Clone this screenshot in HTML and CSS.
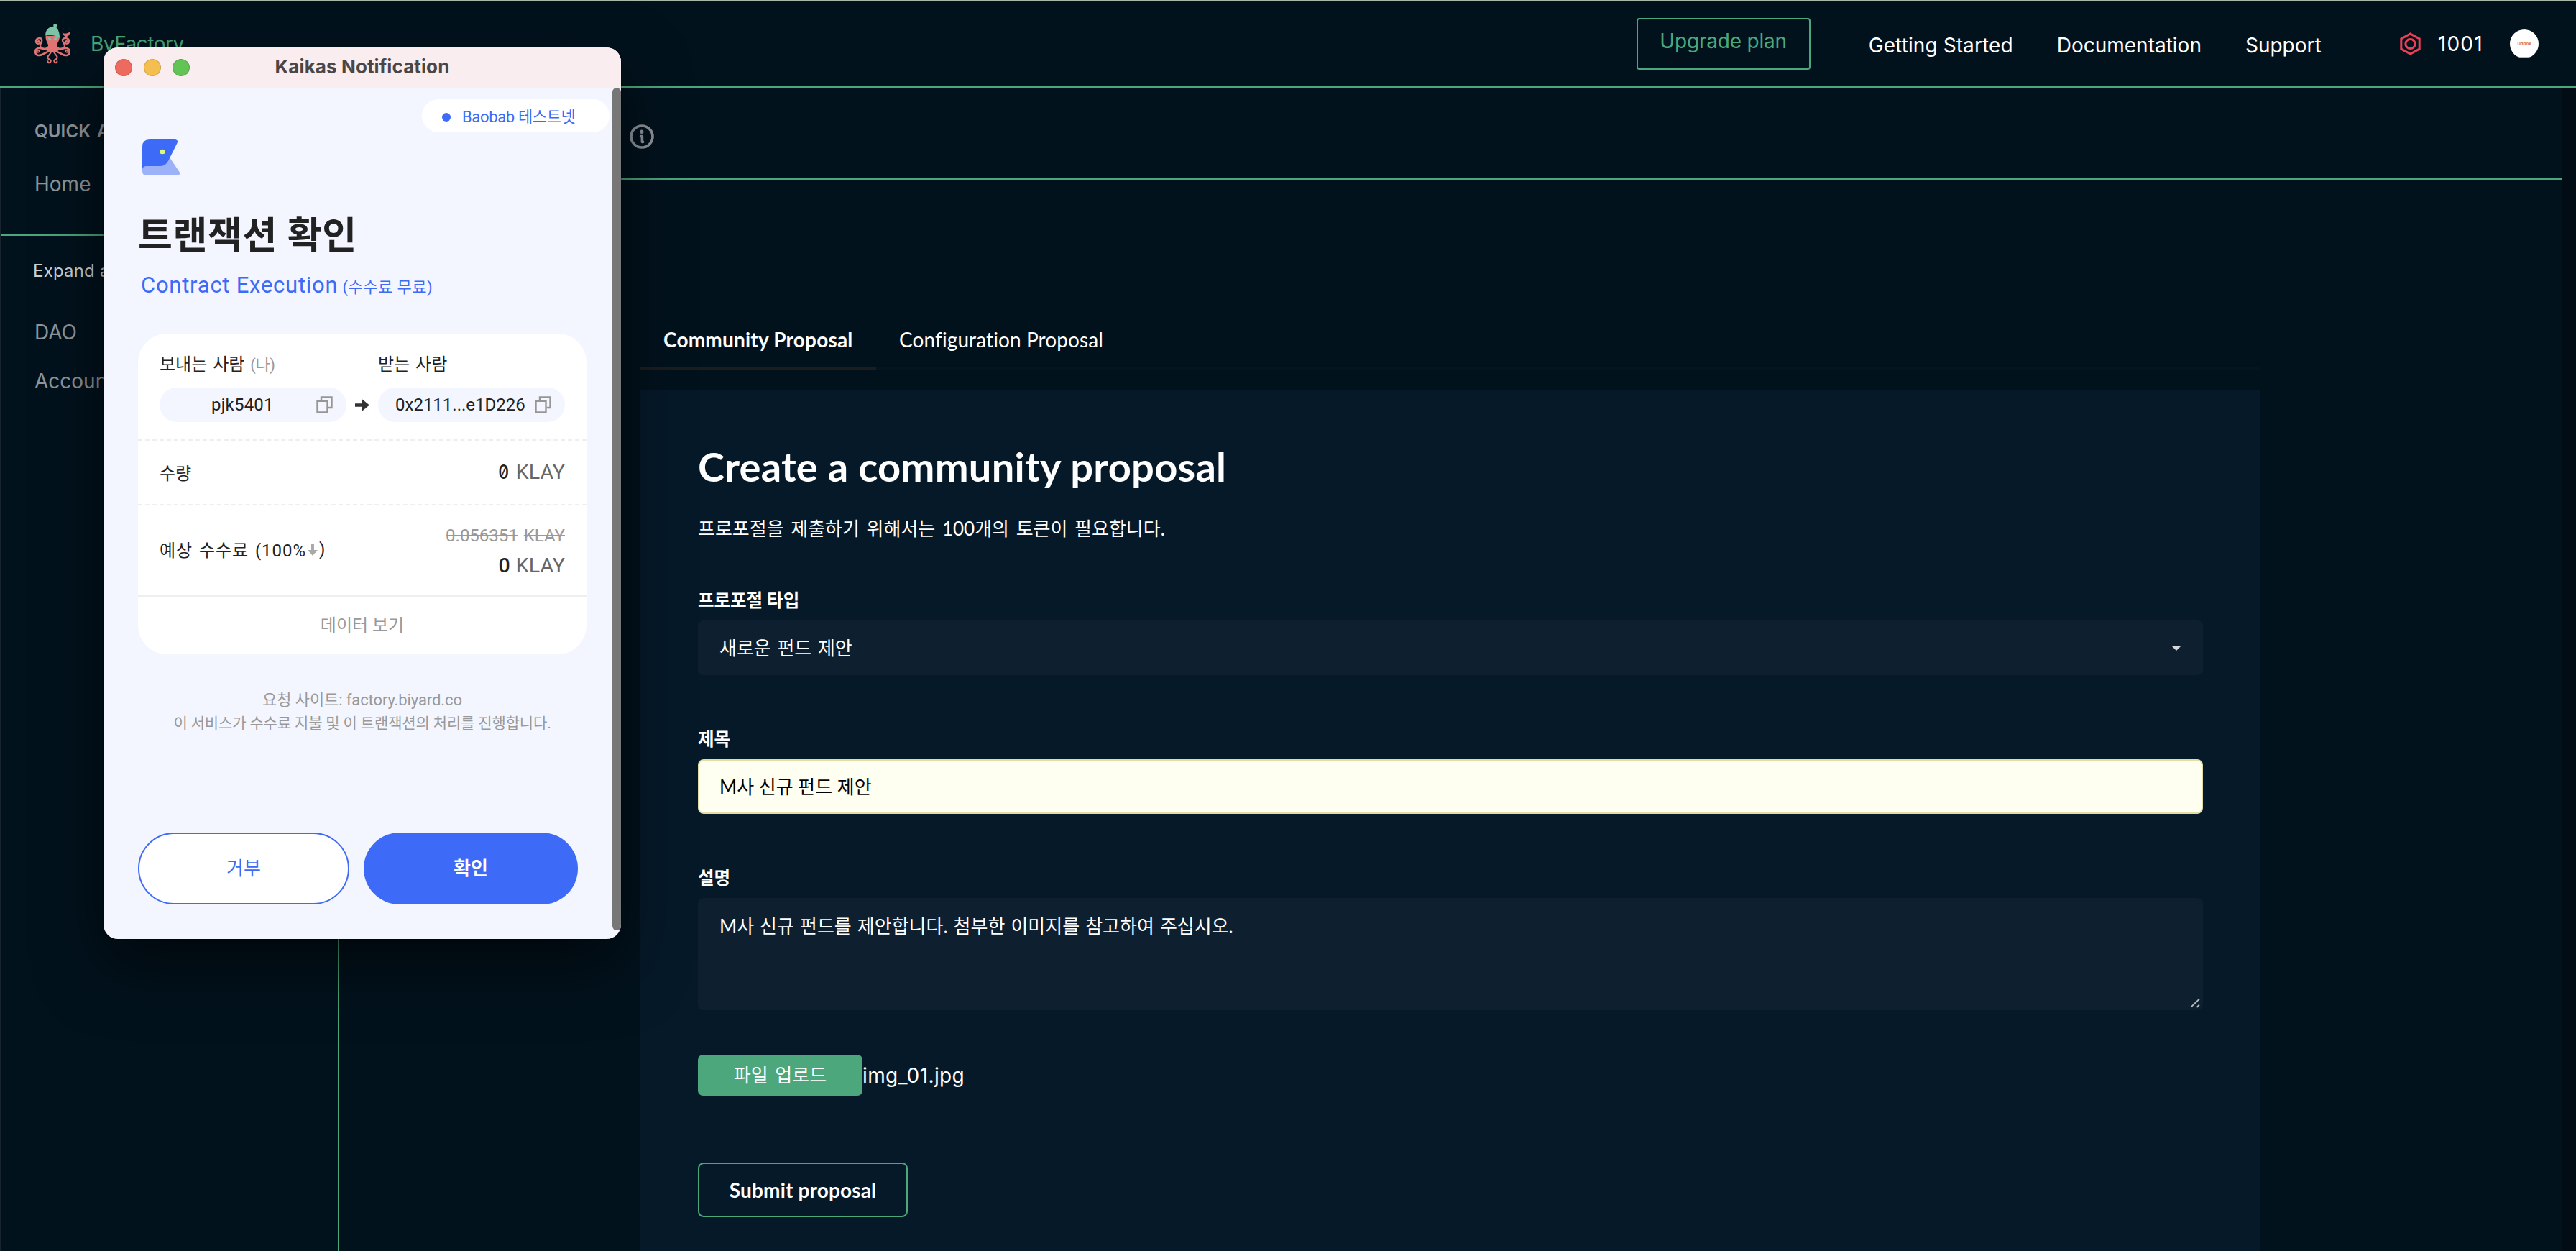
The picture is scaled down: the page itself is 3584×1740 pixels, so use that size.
FILE: index.html
```html
<!DOCTYPE html>
<html lang="ko">
<head>
<meta charset="utf-8">
<title>ByFactory</title>
<link rel="stylesheet" href="styles.css">
</head>
<body>
<div class="app">
  <header class="topbar">
    <div class="brand">
      <svg class="brand-logo" viewBox="54 38 150 168" fill="none" stroke="#e27474" stroke-linecap="round">
        <path stroke-width="7" d="M110 136C98 148 80 146 78 130C77 120 88 112 84 103C79 94 59 98 60 112C61 124 77 124 76 114C75 109 69 109 69 113"/>
        <path stroke-width="7" d="M148 136C160 148 178 146 180 130C181 120 168 114 171 104C176 94 199 97 198 111C197 124 181 124 182 114C183 109 190 109 190 113"/>
        <path stroke-width="8" d="M114 146C98 146 84 138 70 140C52 145 55 168 70 170C90 171 98 156 118 152"/>
        <path stroke-width="8" d="M144 146C160 146 174 138 188 140C206 145 203 168 188 170C168 171 160 156 140 152"/>
        <path stroke-width="5" d="M62 154C64 160 76 158 74 151C72 147 66 148 67 152M196 154C194 160 182 158 184 151C186 147 192 148 191 152"/>
        <path stroke-width="6" d="M124 150C124 168 104 170 110 182C114 190 124 186 122 194C120 204 108 202 110 195M134 150C134 168 154 170 148 182C144 190 134 186 136 194C138 204 150 202 148 195"/>
        <path fill="#e27474" stroke="none" d="M101 88H158C161 106 149 116 147 128C146 136 154 142 160 146L140 158H118L98 146C104 142 112 136 111 128C110 116 98 106 101 88Z"/>
        <path fill="#7cc5a7" stroke="none" d="M100 88C98 66 112 50 134 49C130 42 136 38 142 39C149 41 150 49 144 52C156 64 160 82 158 98C140 86 120 82 100 88Z"/>
        <path fill="#7cc5a7" stroke="none" d="M110 96Q124 94 124 106Q114 112 110 96ZM150 96Q134 94 134 106Q145 112 150 96Z"/>
        <path fill="#e27474" stroke="none" d="M171 76Q186 84 203 71Q201 88 189 92L188 100H184V92Q174 88 171 76Z"/>
        <path stroke="#5c3440" stroke-width="2" d="M174 58L171 76M201 58L203 71"/>
      </svg>
      <span class="brand-name">ByFactory</span>
    </div>
    <div class="actions">
      <button class="upgrade">Upgrade plan</button>
      <nav class="links">
        <a>Getting Started</a>
        <a>Documentation</a>
        <a>Support</a>
      </nav>
      <div class="network">
        <svg class="net-icon" viewBox="0 0 29 32" fill="none" stroke="#eb4056" stroke-width="3"><path d="M14.5 2L27.2 9V23L14.5 30L1.8 23V9Z"/><circle cx="14.5" cy="16" r="6.6"/></svg>
        <span>1001</span>
      </div>
      <div class="avatar">Unbox</div>
    </div>
  </header>

  <div class="body">
    <aside class="sidebar">
      <section class="side-quick">
        <h6 class="side-title">QUICK ACCESS</h6>
        <a class="side-link">Home</a>
      </section>
      <section class="side-tree">
        <span class="side-expand">Expand all</span>
        <a class="side-link dao">DAO</a>
        <a class="side-link account">Account</a>
      </section>
    </aside>

    <main class="main">
      <div class="page-head">
        <svg class="info" viewBox="0 0 34 34"><circle cx="17" cy="17" r="15" fill="none" stroke="#8f969c" stroke-width="3.6"/><circle cx="16.7" cy="10.2" r="2.7" fill="#8f969c"/><path d="M15.6 16.6H17.4V24.4H18.6" fill="none" stroke="#8f969c" stroke-width="3.6" stroke-linecap="round" stroke-linejoin="round"/></svg>
      </div>
      <div class="tabs">
        <div class="tab active">Community Proposal</div>
        <div class="tab">Configuration Proposal</div>
      </div>
      <form class="panel">
        <h1 class="panel-title">Create a community proposal</h1>
        <p class="panel-note">프로포절을 제출하기 위해서는 100개의 토큰이 필요합니다.</p>

        <label class="label">프로포절 타입</label>
        <div class="field select"><span>새로운 펀드 제안</span><svg class="caret" viewBox="0 0 14 7"><path d="M0 0H14L7 7Z" fill="#d3d7d9"/></svg></div>

        <label class="label">제목</label>
        <div class="field filled">M사 신규 펀드 제안</div>

        <label class="label">설명</label>
        <div class="field area"><span>M사 신규 펀드를 제안합니다. 첨부한 이미지를 참고하여 주십시오.</span><svg class="grip" viewBox="0 0 14 14" stroke="#b4bac0" stroke-width="1.8"><path d="M1 13L13 1.5M9.5 13L13 9.5"/></svg></div>

        <div class="upload"><span class="upload-btn">파일 업로드</span><span class="file">img_01.jpg</span></div>
        <div class="submit">Submit proposal</div>
      </form>
    </main>
    <div class="gutter"></div>
  </div>
</div>

<div class="window">
  <div class="titlebar">
    <div class="lights"><i class="red"></i><i class="yellow"></i><i class="green"></i></div>
    <div class="window-title">Kaikas Notification</div>
  </div>
  <div class="sheet">
    <div class="chip"><i class="dot"></i><span>Baobab 테스트넷</span></div>
    <svg class="kaikas" viewBox="0 0 52 50"><path fill="#9db1f9" d="M6 37Q0 35 0 39V44Q0 50 6 50H49Q53.500 49 51.500 45L38 25L28 34Z"/><path fill="#3d6af7" d="M0 40V10Q0 0 10 0H46Q50.500 1 48.500 5L37 28Q33 37 25 37H6Q1 37 0 41Z"/><ellipse cx="28" cy="17" rx="4" ry="3.300" fill="#d8fb7f"/></svg>
    <h2 class="sheet-title">트랜잭션 확인</h2>
    <div class="subtitle"><span class="kind">Contract Execution</span><span class="free">(수수료 무료)</span></div>

    <div class="card">
      <div class="parties">
        <div class="party">
          <div class="party-label">보내는 사람 <small>(나)</small></div>
          <div class="pill"><span class="me">pjk5401</span>
            <svg class="copy" viewBox="0 0 23 24" fill="none" stroke="#969696" stroke-width="2.400"><path d="M7 6.500V1.500H21.500V16H16.500"/><path d="M1.500 6.800H15.500V22.500H1.500Z"/></svg>
          </div>
        </div>
        <svg class="arrow" viewBox="0 0 20 17"><path fill="#333" d="M0 6.200H9.500V0L20 8.500L9.500 17V10.800H0Z"/></svg>
        <div class="party">
          <div class="party-label">받는 사람</div>
          <div class="pill"><span class="to">0x2111...e1D226</span>
            <svg class="copy" viewBox="0 0 23 24" fill="none" stroke="#969696" stroke-width="2.400"><path d="M7 6.500V1.500H21.500V16H16.500"/><path d="M1.500 6.800H15.500V22.500H1.500Z"/></svg>
          </div>
        </div>
      </div>
      <div class="row amount"><span class="key">수량</span><span class="value"><b class="zero">0</b><span>KLAY</span></span></div>
      <div class="row fee">
        <span class="key fee-key">예상 수수료 (100%<svg class="down" viewBox="0 0 14 17"><path fill="#aaa" d="M5 0H9V9H14L7 17L0 9H5Z"/></svg>)</span>
        <div class="fee-values">
          <span class="old"><s>0.056351</s><s>KLAY</s></span>
          <span class="value"><b>0</b><span>KLAY</span></span>
        </div>
      </div>
      <div class="more">데이터 보기</div>
    </div>

    <div class="foot">
      <div>요청 사이트: factory.biyard.co</div>
      <div class="foot-service">이 서비스가 수수료 지불 및 이 트랜잭션의 처리를 진행합니다.</div>
    </div>
    <div class="buttons"><div class="btn reject">거부</div><div class="btn confirm">확인</div></div>
  </div>
  <div class="scrollbar"></div>
</div>
</body>
</html>
```
FILE: styles.css
```css
* { box-sizing: border-box; }

body {
  margin: 0;
  width: 3584px;
  height: 1740px;
  overflow: hidden;
  position: relative;
  background: #02121d;
  color: #fff;
  font-family: Inter, "Noto Sans CJK KR", sans-serif;
}

h1, h2, h6, p { margin: 0; }
svg { display: block; flex: none; }

.app { display: flex; flex-direction: column; height: 1740px; }

/* Top bar */
.topbar {
  flex: none;
  height: 122px;
  display: flex;
  justify-content: space-between;
  align-items: center;
  border-top: 2px solid #a8b9a5;
  border-bottom: 2px solid #4ba77c;
  padding: 0 52px 0 48px;
  font-size: 28px;
  line-height: 40px;
}
.brand { display: flex; align-items: center; }
.brand-logo { width: 50px; height: 56px; }
.brand-name { margin-left: 28px; color: #4ba77c; letter-spacing: -0.5px; }
.actions { display: flex; align-items: center; }
.upgrade {
  width: 242px;
  height: 72px;
  padding: 0 0 8px;
  background: none;
  border: 2px solid #4ba77c;
  border-radius: 4px;
  color: #4ba77c;
  font: 400 28px/40px Inter, sans-serif;
  letter-spacing: -0.2px;
}
.links { display: flex; gap: 61px; margin: 4px 0 0 81px; }
.links a:nth-child(1) { letter-spacing: 0.1px; }
.network { display: flex; align-items: center; gap: 24px; margin-left: 109px; letter-spacing: 1.3px; }
.net-icon { width: 29px; height: 32px; }
.avatar {
  width: 40px;
  height: 40px;
  margin-left: 37px;
  border-radius: 50%;
  background: linear-gradient(#fff 94%, #f0b63a 96%);
  color: #e2763a;
  font: 800 6px/40px Inter, sans-serif;
  text-align: center;
}

/* Body columns */
.body { flex: 1; display: flex; min-height: 0; }
.sidebar {
  flex: none;
  width: 472px;
  border-right: 2px solid #4ba77c;
  border-left: 1px solid #17242e;
  color: #90979c;
  font-size: 28px;
  line-height: 40px;
}
.side-quick { height: 206px; padding: 41px 0 0 47px; border-bottom: 2px solid #4ba77c; }
.side-title { font-size: 24px; font-weight: 600; line-height: 40px; letter-spacing: 0.2px; word-spacing: 2px; }
.side-link { display: block; }
.side-quick .side-link { margin-top: 33px; }
.side-tree { display: flex; flex-direction: column; padding: 29px 0 0 47px; }
.side-expand { margin-left: -2px; color: #cdd1d3; font-size: 24px; letter-spacing: 0.2px; }
.side-link.dao { margin-top: 45px; }
.side-link.account { margin-top: 28px; }

.main { flex: 1; display: flex; flex-direction: column; }
.gutter { width: 20px; background: #020c15; }
.page-head {
  flex: none;
  height: 128px;
  border-bottom: 2px solid #4ba77c;
  padding: 51px 0 0 404px;
}
.info { width: 34px; height: 34px; }

.tabs {
  flex: none;
  display: flex;
  width: 2254px;
  height: 106px;
  margin: 158px 0 0 419px;
  box-shadow: inset 0 -4px #04151f;
  font: 400 28px/40px Lato, sans-serif;
  letter-spacing: 0.1px;
}
.tab { padding: 44px 32px 0; }
.tab.active { width: 328px; font-weight: 700; letter-spacing: 0.2px; border-bottom: 4px solid #1c1d1f; }

/* Proposal form */
.panel {
  flex: 1;
  width: 2254px;
  margin: 28px 0 0 419px;
  padding: 73px 80px 0;
  background: #061929;
  font: 400 26px/40px Lato, "Noto Sans CJK KR", sans-serif;
}
.panel-title { font: 700 56px/68px Lato, sans-serif; letter-spacing: 0.25px; }
.panel-note { margin-top: 32px; word-spacing: 3px; }
.label { display: block; margin: 71px 0 10px; font-size: 24.5px; font-weight: 700; line-height: 36px; }
.panel-note + .label { margin-top: 62px; }
.field {
  height: 76px;
  padding: 18px 30px;
  border-radius: 8px;
  background: #0e2030;
  word-spacing: 2px;
}
.select { display: flex; align-items: center; justify-content: space-between; }
.caret { width: 14px; height: 7px; }
.filled { padding: 16px 28px; border: 2px solid #e2dda4; background: #fffff1; color: #000; word-spacing: 0; }
.area { height: 156px; display: flex; justify-content: space-between; align-items: flex-start; padding: 19px 4px 3px 30px; word-spacing: 1.4px; }
.grip { width: 14px; height: 14px; align-self: flex-end; }
.upload { display: flex; align-items: center; height: 57px; margin-top: 62px; }
.upload-btn {
  width: 229px;
  height: 57px;
  border-radius: 7px;
  background: #4ca77d;
  line-height: 57px;
  text-align: center;
  word-spacing: 3px;
}
.file { font: 400 28px/40px Inter, sans-serif; letter-spacing: 0.4px; }
.submit {
  width: 292px;
  height: 76px;
  margin-top: 93px;
  border: 2px solid #4ca77d;
  border-radius: 8px;
  font: 700 28px/72px Lato, sans-serif;
  letter-spacing: 0.15px;
  text-align: center;
}

/* Wallet window floating over the page */
.window {
  position: absolute;
  left: 144px;
  top: 66px;
  width: 720px;
  height: 1240px;
  border-radius: 20px;
  overflow: hidden;
  background: #f3f6fe;
  box-shadow: 0 36px 90px rgba(0, 0, 0, 0.6), 0 0 2px rgba(0, 0, 0, 0.8);
  color: #222;
  font-family: Roboto, "Noto Sans CJK KR", sans-serif;
}
.titlebar {
  display: grid;
  grid-template-columns: 160px 1fr 160px;
  align-items: center;
  height: 57px;
  background: #f9edf0;
  border-bottom: 1px solid #ccd0d8;
}
.lights { display: flex; gap: 16px; padding-left: 16px; }
.lights i { width: 24px; height: 24px; border-radius: 50%; border: 1px solid rgba(0, 0, 0, 0.14); }
.red { background: #ec6a5e; }
.yellow { background: #f4be50; }
.green { background: #61c454; }
.window-title { text-align: center; color: #4a4648; font: 700 26px/40px Inter, sans-serif; letter-spacing: 0.1px; padding-bottom: 2px; }

.sheet { display: flex; flex-direction: column; padding: 15px 48px 0; }
.chip {
  align-self: flex-end;
  width: 261px;
  height: 46px;
  margin-right: -32px;
  padding: 0 0 2px 28px;
  display: flex;
  align-items: center;
  gap: 16px;
  border-radius: 23px;
  background: #fff;
  color: #3d6af7;
  font-size: 22px;
  letter-spacing: -0.35px;
}
.dot { width: 12px; height: 12px; margin-top: 6px; border-radius: 50%; background: #3d6af7; }
.kaikas { width: 52px; height: 50px; margin: 10px 0 0 6px; }
.sheet-title { margin-top: 53px; font-size: 52px; font-weight: 700; line-height: 64px; letter-spacing: 0.7px; }
.subtitle { display: flex; align-items: baseline; gap: 6px; height: 40px; margin-top: 16px; padding-left: 4px; color: #3d6af7; line-height: 40px; white-space: nowrap; }
.kind { font-size: 31px; letter-spacing: 0.75px; }
.free { font-size: 22px; letter-spacing: 0.5px; }

.card { height: 446px; margin-top: 47px; border-radius: 40px; background: #fff; font-size: 24px; }
.parties { display: flex; justify-content: space-between; height: 149px; padding: 27px 30px 0; border-bottom: 2px dashed #eee; }
.party { width: 260px; }
.party-label { height: 32px; line-height: 32px; word-spacing: 2px; }
.party-label small { font-size: 22px; color: #999; letter-spacing: -0.4px; }
.pill { display: flex; align-items: center; justify-content: space-between; height: 48px; margin-top: 16px; padding-right: 19px; border-radius: 24px; background: #f3f6fe; }
.me { margin-left: 72px; letter-spacing: 0.2px; }
.to { margin-left: 24px; }
.copy { width: 23px; height: 24px; }
.arrow { width: 20px; height: 17px; margin-top: 64px; }
.row { display: flex; justify-content: space-between; align-items: center; padding: 0 30px; }
.amount { height: 90px; border-bottom: 2px dashed #eee; }
.amount .key { padding-bottom: 1px; }
.value { display: flex; gap: 8px; font-size: 28.5px; line-height: 42px; color: #666; letter-spacing: 0.1px; }
.value b { font-weight: 500; color: #222; }
.value .zero { font-family: Inter, sans-serif; font-size: 27px; font-feature-settings: "zero"; transform: scaleX(0.85); }
.fee { height: 127px; border-bottom: 2px solid #eee; }
.fee-key { display: flex; align-items: center; padding-bottom: 4px; white-space: pre; letter-spacing: 0.95px; word-spacing: 2px; }
.down { width: 14px; height: 17px; margin: 2px 2px 0; }
.fee-values { display: flex; flex-direction: column; align-items: flex-end; }
.old { display: flex; gap: 8px; line-height: 42px; color: #999; }
.more { height: 80px; line-height: 80px; text-align: center; color: #999; }

.foot { margin-top: 48px; text-align: center; font-size: 22px; line-height: 32px; color: #999; white-space: nowrap; letter-spacing: -0.1px; }
.foot-service { font-size: 21px; letter-spacing: -0.15px; }
.buttons { display: flex; gap: 20px; margin-top: 136px; font-size: 26px; text-align: center; }
.btn { height: 100px; border-radius: 50px; line-height: 100px; }
.reject { width: 294px; border: 2px solid #3d6af7; line-height: 96px; background: #fff; color: #3d6af7; }
.confirm { width: 298px; background: #3d6af7; color: #fff; font-weight: 700; }
.scrollbar { position: absolute; right: 0; top: 56px; width: 12px; height: 1172px; border-radius: 6px; background: #777; }
```
